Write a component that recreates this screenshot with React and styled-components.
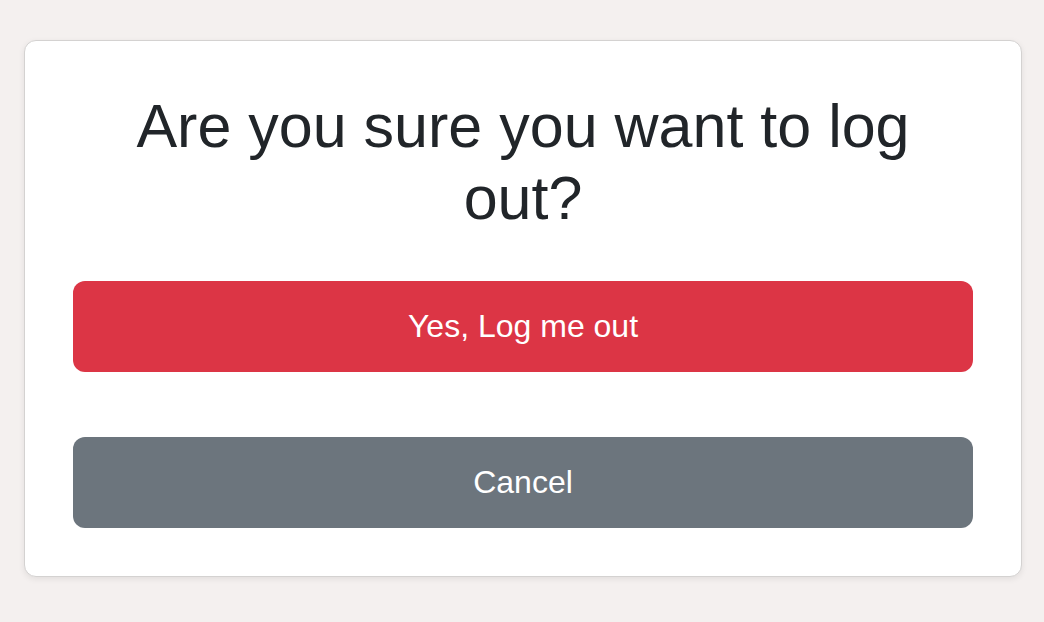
import React from 'react';
import styled, { createGlobalStyle } from 'styled-components';

const GlobalStyle = createGlobalStyle`
  html, body {
    margin: 0;
    padding: 0;
    background: #f4f0ef;
    font-family: "Liberation Sans", Arial, Helvetica, sans-serif;
    color: #212529;
  }
`;

const Page = styled.div`
  min-height: 622px;
  padding: 40px 22px 0 24px;
  box-sizing: border-box;
`;

const Card = styled.div`
  background: #fff;
  border: 1px solid #d4d2d1;
  border-radius: 12px;
  box-shadow: 0 2px 6px rgba(0, 0, 0, 0.08);
  padding: 49px 48px 48px;
  display: flex;
  flex-direction: column;
`;

const Title = styled.h1`
  margin: 0 0 47px;
  font-size: 61px;
  line-height: 72px;
  font-weight: 400;
  text-align: center;
  color: #212529;
  padding: 0 4px;
`;

const Actions = styled.div`
  display: flex;
  flex-direction: column;
  gap: 65px;
`;

const Button = styled.button`
  height: 91px;
  width: 100%;
  border: none;
  border-radius: 12px;
  font-family: inherit;
  font-size: 32px;
  color: #fff;
  cursor: pointer;
  background: ${(p) => (p.$variant === 'danger' ? '#dc3545' : '#6c757d')};
`;

export default function App() {
  return (
    <>
      <GlobalStyle />
      <Page>
        <Card>
          <Title>Are you sure you want to log out?</Title>
          <Actions>
            <Button $variant="danger">Yes, Log me out</Button>
            <Button $variant="secondary">Cancel</Button>
          </Actions>
        </Card>
      </Page>
    </>
  );
}
